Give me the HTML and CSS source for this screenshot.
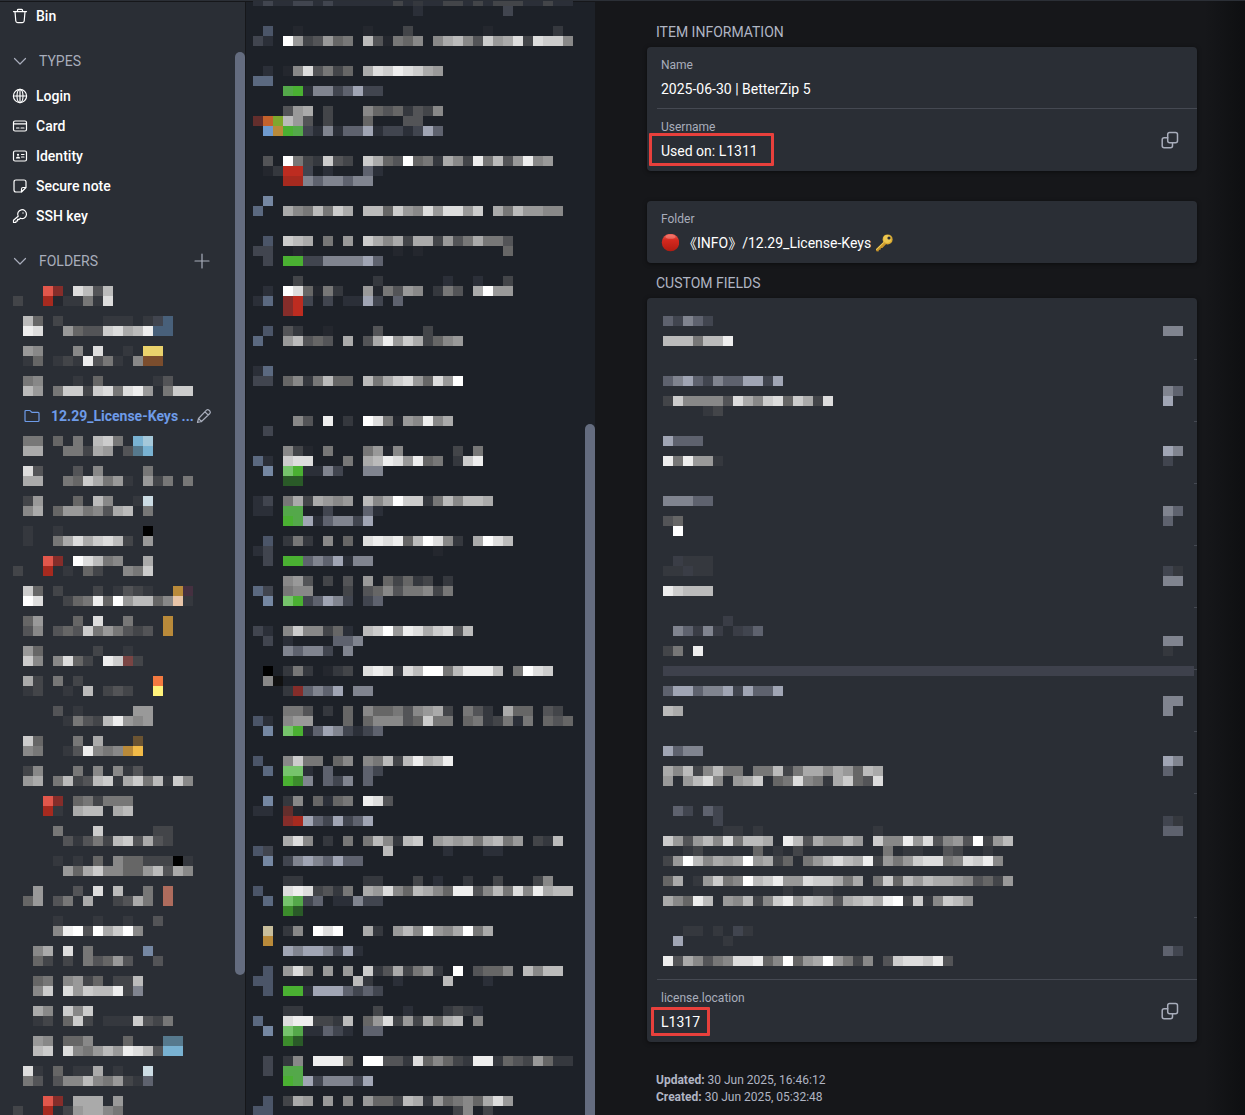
FILE: index.html
```html
<!DOCTYPE html>
<html lang="en">
  <head>
    <meta charset="UTF-8" />
    <meta name="viewport" content="width=device-width, initial-scale=1.0" />
    <title>Vault</title>
    <link rel="stylesheet" href="styles.css">
  </head>
  <body>
    <aside class="sidebar">
      <nav class="nav">
        <button class="nav-item">
          <svg class="icon" viewBox="0 0 16 16"><path d="M1.5 3.6h13M5.5 3.4V2.2q0-.9.9-.9h3.2q.9 0 .9.9v1.2M3 3.8l.8 9.2q.2 1.6 1.8 1.6h4.8q1.600 0 1.800-1.600L13 3.800"/></svg>
          Bin
        </button>
        <button class="nav-head">
          <svg class="icon" viewBox="0 0 16 16"><path d="M2.500 5.500 8 11l5.500-5.500"/></svg>
          TYPES
        </button>
        <button class="nav-item">
          <svg class="icon" viewBox="0 0 16 16"><circle cx="8" cy="8" r="6.600"/><ellipse cx="8" cy="8" rx="3" ry="6.600"/><path d="M1.500 8h13M8 1.400v13.200"/></svg>
          Login
        </button>
        <button class="nav-item">
          <svg class="icon" viewBox="0 0 16 16"><rect x="1.500" y="3" width="13" height="10" rx="1.500"/><path d="M1.500 5.800h13M4.500 10h2.500M9 10h3"/></svg>
          Card
        </button>
        <button class="nav-item">
          <svg class="icon" viewBox="0 0 16 16"><rect x="1.500" y="3" width="13" height="10" rx="1.500"/><path class="solid" d="M3.800 10.500q.2-2 2.200-2t2.200 2z"/><circle class="solid" cx="6" cy="6.800" r="1.100"/><path d="M9.500 6.500H12M9.500 9H12"/></svg>
          Identity
        </button>
        <button class="nav-item">
          <svg class="icon" viewBox="0 0 16 16"><path d="M9.500 14H4q-2 0-2-2V4q0-2 2-2h8q2 0 2 2v5.500L9.500 14v-3q0-1.500 1.500-1.500h3"/></svg>
          Secure note
        </button>
        <button class="nav-item">
          <svg class="icon" viewBox="0 0 16 16"><path d="M6.200 8.200a4.400 4.400 0 1 1 2.200 2l-1.200 1.200H5.600v1.600H4.200L3.800 14.500H1.500v-2.300z"/><circle class="solid" cx="11" cy="5" r=".7"/></svg>
          SSH key
        </button>
        <div class="nav-row">
          <button class="nav-head">
            <svg class="icon" viewBox="0 0 16 16"><path d="M2.500 5.500 8 11l5.500-5.500"/></svg>
            FOLDERS
          </button>
          <button class="add"><svg class="icon" viewBox="0 0 16 16"><path d="M8 1v14M1 8h14"/></svg></button>
        </div>
        <ul class="folders">
          <li class="mosaic" data-rows="...RQ.db5b|4..D23373d"></li>
          <li class="mosaic" data-rows=".b6.4....333.3kB|.ed..9655cdabeBB"></li>
          <li class="mosaic" data-rows=".98...8.d..3.YY|.36.343e573.8OO"></li>
          <li class="mosaic" data-rows=".78...3.6.....35|.b9.7cc4cd7de9.7cc"></li>
          <li class="active">
            <button class="folder">
              <svg class="icon" viewBox="0 0 16 16"><path d="M1 12.500V3.500q0-1 1-1h3.500q.8 0 1.200.6l.6.8q.3.400.9.400H14q1 0 1 1v7.200q0 1-1 1H2q-1 0-1-1z"/></svg>
              <span>12.29_License-Keys ...</span>
            </button>
            <button class="edit"><svg class="icon" viewBox="0 0 16 16"><path d="M1.500 14.500l1-4 8-8.300q1.200-1.200 2.500 0l.8.8q1.200 1.200 0 2.500l-8.300 8zM9 3.800 12.200 7M2.500 10.500l3 3"/></svg></button>
          </li>
          <li class="mosaic" data-rows=".77.6.7.bc7.PC|.aa..774a9.5TP"></li>
          <li class="mosaic" data-rows=".d5...5.8....7|.aa..76ca793.947.7"></li>
          <li class="mosaic" data-rows=".49...6.b8..3W|.8a.699785ab.7"></li>
          <li class="mosaic" data-rows=".3..3........0|.3..7adacdb4.9"></li>
          <li class="mosaic" data-rows="...RQ.fdb78..a|4..D.3.64..87c"></li>
          <li class="mosaic" data-rows=".c6.4...4.3543..AV|.fd..467e6f9bb68N3"></li>
          <li class="mosaic" data-rows=".69...6.d..7...A|.58.565c797545.A"></li>
          <li class="mosaic" data-rows=".96.....4..3|.c8.8d64.ecM4"></li>
          <li class="mosaic" data-rows=".a4.7.4.......H|.34..3.b.454..J"></li>
          <li class="mosaic" data-rows="....5.3.....99|.....3754be989"></li>
          <li class="mosaic" data-rows=".c6...7.a...K|.87..35e878AI"></li>
          <li class="mosaic" data-rows=".48...7.8.835|.9a.7b45bc3ac7b3c8"></li>
          <li class="mosaic" data-rows="...RQ.674777|...D3.abb.ab"></li>
          <li class="mosaic" data-rows="....7...c.....44|.....53574bc5a54"></li>
          <li class="mosaic" data-rows="....3.3.6.86644403|.....96ac88669b5a8"></li>
          <li class="mosaic" data-rows="..9...5.d.b..7.S|.69.57.a..45a7.S"></li>
          <li class="mosaic" data-rows="....3...3..3..5|....8ef5facf8"></li>
          <li class="mosaic" data-rows="..8a.d.7.....u|..64.4.75695..5"></li>
          <li class="mosaic" data-rows="..67.8946.44b|..8c.d9cbbe4m"></li>
          <li class="mosaic" data-rows="..a8.c8c|..34.6c4.333c547"></li>
          <li class="mosaic" data-rows="..98.668...6...TT|..bc.d879b9edb5PP"></li>
          <li class="mosaic" data-rows=".d3.6.33a.3..W|.75.588b87943l"></li>
          <li class="mosaic" data-rows="...RQ.aaa.9|4..D.49aa87"></li>
        </ul>
      </nav>
      <div class="scrollbar nav-scroll"><div class="thumb"></div></div>
    </aside>

    <section class="items">
      <ul class="item-list">
        <li class="mosaic" data-rows="jkjjkkjkjjjjjj4j3jj44j4j444jj4jj|................j........k"></li>
        <li class="mosaic" data-rows="|.s..2......2...4.......2......3|kj.f945967.b52768.8ab85c9ad4dcc8||"></li>
        <li class="mosaic" data-rows=".j.28d5746.adcedca9|tt|...gGjmmklnkk|"></li>
        <li class="mosaic" data-rows="...59a.4...86563548|wxyb95.4...6...55|.vAGgkjmjllnjkkjknl||"></li>
        <li class="mosaic" data-rows=".5.f743c54.ca65f673a84e7b59e89|.23ZZk.j...lj|...DDmlmmlmm|"></li>
        <li class="mosaic" data-rows=".u|t..a87b7ca.bb6c98d9dd9c.a7b9988||"></li>
        <li class="mosaic" data-rows=".s.cba.7.9.ca8a4aa4957a775|kk..2.........2.2........6|.k.GGkkmmmmnl|"></li>
        <li class="mosaic" data-rows="....4.......3......j..j..4|.j.fd6273..927598.375.af99|jt.QZk.k.jjnk.l|...QZ|"></li>
        <li class="mosaic" data-rows=".s.53..2....5....4|t..9b565.a.5ae9ca4689||"></li>
        <li class="mosaic" data-rows="jt|kk.6837b66.b7acd96d9f|||"></li>
        <li class="mosaic" data-rows="....85.e.3.fd7298e8a|.k|"></li>
        <li class="mosaic" data-rows="...842.7...7928.....4.7|tj.cdd...7.abed9e67.3ce|.u.LGjjmk..mm|...ii|"></li>
        <li class="mosaic" data-rows="jk.7a4a989.b8afcc37b8bba|jj.gg..k...lj|...Ggnjlmmkn|"></li>
        <li class="mosaic" data-rows=".s.373.8.6.dede6bfd83.afdb|jk................2|.k.GGlmlnjmm|"></li>
        <li class="mosaic" data-rows="...895.4.5.9.64634.3|tk.788...4.568577847|.u.LGklnmk.kl||"></li>
        <li class="mosaic" data-rows="kj.8c8846j.bcf9edacd5b|.k.j....llm|...mlmmk.m|"></li>
        <li class="mosaic" data-rows=".0.373.234.ded3dbff7beeeb.7fdc|.81|...3Qlmln.mm|"></li>
        <li class="mosaic" data-rows="...775.3.6.8667589a4.753.a66.54|sj.899...6.688856c77.67347j7.656|.u.LGjlnmkjkl||"></li>
        <li class="mosaic" data-rows="s..8c77.68.87b4beabe|.t.LLj.l...lk|...Ghm.lkm.l|"></li>
        <li class="mosaic" data-rows=".u.38.6j67.ed5|jj.w2|...QDnlknkln|"></li>
        <li class="mosaic" data-rows="...ad8.3.7.7b83bc.9a9a7ab79.43b|sk...........b.....j...jj|.u.kmnmlnll|"></li>
        <li class="mosaic" data-rows="...33......33...4.j..3..4...48|s..ded4537.a9d86ba86ee58b7d8eabb|.t.Lgkl.jjmkk|...hi|"></li>
        <li class="mosaic" data-rows=".U.38.fdf..a3.9b8f98af7a|.A|...nmnnmknj|"></li>
        <li class="mosaic" data-rows=".s.9d8.9.9.c35a4793.f.5668.b8bb|ss........b3..j....b...j|.s.GGjnnnlklk|"></li>
        <li class="mosaic" data-rows="...33.......4..j...343j|t..dee443b.69d494a6ab.8|.u.Lgjjlkj.ll|...hi|"></li>
        <li class="mosaic" data-rows=".k.38.eee6.ff553d68643ee36549633|.k.gg|...Ggnkmmmkn|"></li>
        <li class="mosaic" data-rows=".s.4a9.9.8.9664ba396786ad9|ss..................48.4"></li>
      </ul>
      <div class="scrollbar item-scroll"><div class="thumb"></div></div>
    </section>

    <main class="detail">
      <h2>ITEM INFORMATION</h2>
      <div class="card">
        <div class="field">
          <div class="text">
            <div class="label">Name</div>
            <div class="value">2025-06-30 | BetterZip 5</div>
          </div>
        </div>
        <div class="field">
          <div class="text">
            <div class="label">Username</div>
            <div class="value marked">Used on: L1311</div>
          </div>
          <button class="copy"><svg class="icon" viewBox="0 0 18 18"><rect x="6.700" y="1.500" width="9.800" height="10.300" rx="2"/><path d="M6.700 6.800H3.200q-2 0-2 2v5.900q0 2 2 2h6.300q2 0 2-2v-2.900"/></svg></button>
        </div>
      </div>

      <div class="card folder-card">
        <div class="field">
          <div class="text">
            <div class="label">Folder</div>
            <div class="value with-icons">
              <svg class="emoji" viewBox="0 0 18 18">
                <defs><linearGradient id="ball" x1="0" y1="0" x2="0" y2="1"><stop offset="0" stop-color="#f0655a"/><stop offset=".35" stop-color="#d5291f"/><stop offset="1" stop-color="#b01c12"/></linearGradient></defs>
                <circle cx="9.500" cy="8.500" r="8.700" fill="url(#ball)"/>
                <ellipse cx="9.500" cy="2.800" rx="5" ry="2" fill="#f9a59b" opacity=".4"/>
              </svg>
              <span>《INFO》/12.29_License-Keys</span>
              <svg class="emoji key" viewBox="0 0 18 18">
                <path d="M9 7.500 1 15.200l.3 2 2.200.2.5-1.600 1.500-.1.400-1.600 1.500-.2 3.800-4z" fill="#c8952a"/>
                <path d="M9 7.500 1 15.200l.2 1L9.600 8.300z" fill="#f0cf5c"/>
                <circle cx="12.600" cy="5.400" r="5" fill="#d9a932"/>
                <circle cx="12.200" cy="5" r="3.900" fill="#ecc750"/>
                <circle cx="14" cy="4" r="1.600" fill="#2a2e35"/>
              </svg>
            </div>
          </div>
        </div>
      </div>

      <h2>CUSTOM FIELDS</h2>
      <div class="card">
        <div class="hidden-fields">
          <div class="hidden-list">
            <div class="hidden-field"><div class="mosaic" data-rows="|lkmlk||bbb7bbe||"></div><div class="mosaic" data-rows="||mm|||"></div></div>
            <div class="hidden-field"><div class="mosaic" data-rows="|lmnlkmllnnkn||4c88885da8cd6ca4d|....34|"></div><div class="mosaic" data-rows="||ml|n.||"></div></div>
            <div class="hidden-field"><div class="mosaic" data-rows="|nlll||e7e993||"></div><div class="mosaic" data-rows="||nm|k.||"></div></div>
            <div class="hidden-field"><div class="mosaic" data-rows="|mmmll||56|.f|"></div><div class="mosaic" data-rows="||ml|l.||"></div></div>
            <div class="hidden-field"><div class="mosaic" data-rows="|.q333|33q33||ecbbb|"></div><div class="mosaic" data-rows="||k3|mm||"></div></div>
            <div class="hidden-field"><div class="mosaic" data-rows="|......q|.mlqmq.qkl||47.e|"></div><div class="mosaic" data-rows="|||mm|3.|"></div></div>
            <div class="band"></div>
            <div class="hidden-field"><div class="mosaic" data-rows="|lnnlmmnknlln||ba||"></div><div class="mosaic" data-rows="||mm|m.||"></div></div>
            <div class="hidden-field"><div class="mosaic" data-rows="|nlmm||a8b48b77.77b47aa8a96ba|9.9bd8.9ac.67d873ac65d|"></div><div class="mosaic" data-rows="||nm|l.||"></div></div>
            <div class="hidden-field"><div class="mosaic" data-rows="|.lk.lk|.....k|......33.3...........3|c959b8d7bba.eb5a88b9.c88e9d5895f49b|..34.....6.3.4........7.33..54..3|49fb8a9af9a46.79bdbae4979cdd78dce8||6a.39c78fbce99dcca7a.7c6b9baa985649|............3..33|a86eb.98b48ce9cb95abcaef4c38cb9|"></div><div class="mosaic" data-rows="||k3|ll|"></div></div>
            <div class="hidden-field"><div class="mosaic" data-rows="|..33.3.k3|.n....3||e5a8578dde68f69af9748.5cddce5|"></div><div class="mosaic" data-rows="|||lk||"></div></div>
          </div>
          <div class="ticks"><i></i><i></i><i></i><i></i><i></i><i></i><i></i><i></i><i class="tall"></i></div>
        </div>
        <div class="field">
          <div class="text">
            <div class="label">license.location</div>
            <div class="value marked tight">L1317</div>
          </div>
          <button class="copy"><svg class="icon" viewBox="0 0 18 18"><rect x="6.700" y="1.500" width="9.800" height="10.300" rx="2"/><path d="M6.700 6.800H3.200q-2 0-2 2v5.900q0 2 2 2h6.300q2 0 2-2v-2.900"/></svg></button>
        </div>
      </div>

      <div class="dates">
        <div><b>Updated:</b> 30 Jun 2025, 16:46:12</div>
        <div><b>Created:</b> 30 Jun 2025, 05:32:48</div>
      </div>
    </main>
    <script src="script.js"></script>
  </body>
</html>
```
FILE: styles.css
```css
* {
  box-sizing: border-box;
}
body {
  display: flex;
  height: 100vh;
  margin: 0;
  overflow: hidden;
  border-top: 1px solid #2b2f36;
  background-color: #16171a;
  color: #fff;
  font-family: Roboto, "Noto Sans CJK SC", sans-serif;
  font-size: 14px;
  line-height: 20px;
}
button {
  display: flex;
  align-items: center;
  padding: 0;
  border: 0;
  background: none;
  color: inherit;
  font: inherit;
  cursor: pointer;
}
ul {
  margin: 0;
  padding: 0;
  list-style: none;
}
.icon {
  width: 16px;
  height: 16px;
  flex: none;
  fill: none;
  stroke: currentColor;
  stroke-width: 1.2;
  stroke-linejoin: round;
  stroke-linecap: round;
}
.icon .solid {
  fill: currentColor;
  stroke: none;
}
.mosaic svg {
  display: block;
}

/* sidebar */
.sidebar {
  display: flex;
  flex: 0 0 246px;
  border-right: 1px solid #16171a;
  background-color: #2a2e35;
  box-shadow: inset 0 1px #16171a;
}
.nav {
  flex: 1;
  overflow: hidden;
}
.nav-item {
  gap: 8px;
  height: 30px;
  padding-left: 12px;
  font-weight: 500;
}
.nav-head {
  gap: 11px;
  height: 30px;
  margin: 15px 0 5px;
  padding-left: 12px;
  color: #a8adbb;
}
.nav-row {
  display: flex;
  justify-content: space-between;
  padding-right: 25px;
}
.add {
  padding-top: 10px;
  color: #a8adbb;
}
.folders li {
  height: 30px;
  padding: 5px 0 5px 13px;
}
.folders .active {
  display: flex;
  align-items: center;
  gap: 2px;
  padding: 0 0 0 24px;
  color: #6e9be8;
  font-weight: 700;
}
.folder {
  gap: 11px;
}
.edit {
  color: #a8adbb;
}
.scrollbar {
  display: flex;
  flex-direction: column;
  flex: 0 0 10px;
}
.scrollbar::before {
  content: "";
}
.thumb {
  border-radius: 5px;
  background-color: #646c7f;
}
.nav-scroll::before {
  flex: 51;
}
.nav-scroll .thumb {
  flex: 923;
}
.nav-scroll::after {
  content: "";
  flex: 140;
}

/* item list */
.items {
  display: flex;
  flex: 0 0 349px;
  overflow: hidden;
  background-color: #1d2128;
  box-shadow: inset 0 1px #16171a;
}
.item-list {
  flex: 1;
  margin-top: -5px;
  padding-left: 7px;
}
.item-scroll::before {
  flex: 423;
}
.item-scroll .thumb {
  flex: 691;
  border-radius: 5px 5px 0 0;
}

/* item detail */
.detail {
  flex: 1;
  padding: 21px 48px 0 52px;
  background: linear-gradient(to left, #0e0f11, #16171a 40px);
}
h2 {
  margin: 0;
  padding: 0 9px 5px;
  color: #b0b5c3;
  font-size: 14px;
  font-weight: 400;
  line-height: 20px;
}
.card {
  border-radius: 4px;
  background-color: #2a2e35;
  box-shadow: 0 1px 4px rgba(0, 0, 0, 0.5);
}
.folder-card {
  margin: 30px 0 10px;
}
.field {
  display: flex;
  align-items: center;
  justify-content: space-between;
  padding: 10px 18px 10px 14px;
}
.field + .field,
.hidden-fields + .field {
  margin: -1px 0 0 10px;
  padding-left: 4px;
  border-top: 1px solid #454952;
}
.label {
  margin-bottom: 6px;
  color: #a8adbb;
  font-size: 12px;
  line-height: 16px;
}
.value {
  width: fit-content;
}
.copy {
  color: #a8adbb;
}
.copy .icon {
  width: 18px;
  height: 18px;
  stroke-width: 1.5;
}
.marked {
  position: relative;
}
.marked::after {
  content: "";
  position: absolute;
  inset: -8px -16px -5px -12px;
  border: 3px solid #e8403c;
  border-radius: 1px;
}
.tight::after {
  inset: -5px -10px -4px -10px;
}
.with-icons {
  display: flex;
  align-items: center;
  gap: 4px;
}
.emoji {
  width: 18px;
  height: 18px;
}
.hidden-fields {
  display: flex;
  padding: 0 0 4px 16px;
}
.hidden-list {
  flex: 1;
  padding-top: 8px;
}
.hidden-field {
  display: flex;
  justify-content: space-between;
  padding-right: 11px;
}
.band {
  height: 10px;
  background-color: #3e414c;
}
.ticks {
  flex: 0 0 3px;
}
.ticks i {
  display: block;
  height: 62px;
  border-bottom: 1px solid #454952;
}
.ticks .tall {
  height: 124px;
}
.dates {
  padding: 30px 9px;
  color: #b0b5c3;
  font-size: 12px;
  line-height: 17px;
}
```
FILE: script.js
```javascript
const CELL = 10;

// hex digits are grey levels unless listed, the other letters are looked up here
const colors = {
  2: "#24272e", 3: "#35383e", 4: "#434549", 5: "#535457",
  j: "#2b2f38", k: "#41454f", l: "#5e626e", m: "#80848f", n: "#a0a5b4",
  s: "#4b5568", t: "#5b6980", u: "#7587a2", q: "#3a3d46",
  R: "#e2574b", Q: "#852d2a", D: "#a62a1f", Z: "#bd2c20", w: "#632e2c",
  G: "#4ab032", g: "#54a84a", L: "#76c46c", h: "#3c8c2c", i: "#2a5a28",
  B: "#48607a", T: "#56798d", P: "#79b2d2", C: "#a5c8da", W: "#ccdce4",
  v: "#6f9ace", Y: "#ead26c", O: "#7b4d2d", A: "#b98a3a", I: "#f2bb48",
  K: "#6b5432", U: "#c8be9c", N: "#e8c5a8", H: "#f47a40", J: "#fff27a",
  M: "#7a4544", S: "#ae6c5d", V: "#453040", x: "#c4622c", y: "#7fa82e"
};

document.querySelectorAll(".mosaic").forEach((el) => {
  const rows = el.dataset.rows.split("|");
  const cols = Math.max(...rows.map((row) => row.length));
  let rects = "";

  rows.forEach((row, y) => {
    [...row].forEach((c, x) => {
      if (c === ".") return;
      const fill = colors[c] || "#" + c.repeat(6);
      rects += `<rect x="${x * CELL}" y="${y * CELL}" width="${CELL}" height="${CELL}" fill="${fill}"/>`;
    });
  });

  el.innerHTML = `<svg width="${cols * CELL}" height="${rows.length * CELL}">${rects}</svg>`;
});
```
